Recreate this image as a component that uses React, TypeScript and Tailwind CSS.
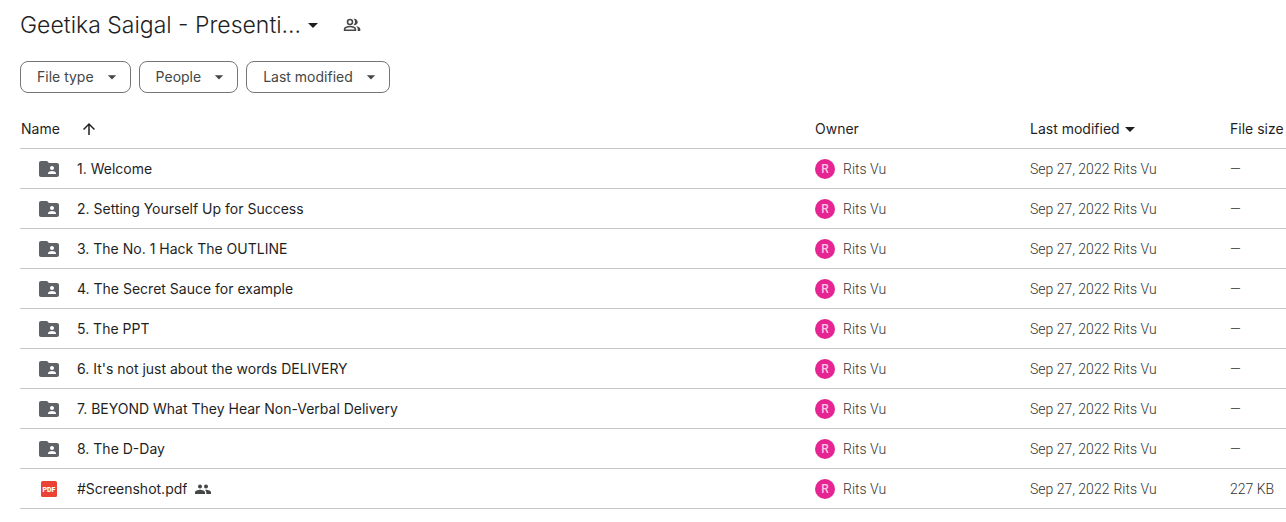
import type { ReactNode } from 'react';
import { MdArrowDropDown, MdArrowUpward, MdFolderShared } from 'react-icons/md';

interface DriveItem {
    name: string;
    kind: 'folder' | 'pdf';
    shared?: boolean;
    size?: string;
}

const ITEMS: DriveItem[] = [
    { name: '1. Welcome', kind: 'folder' },
    { name: '2. Setting Yourself Up for Success', kind: 'folder' },
    { name: '3. The No. 1 Hack The OUTLINE', kind: 'folder' },
    { name: '4. The Secret Sauce for example', kind: 'folder' },
    { name: '5. The PPT', kind: 'folder' },
    { name: "6. It's not just about the words DELIVERY", kind: 'folder' },
    { name: '7. BEYOND What They Hear Non-Verbal Delivery', kind: 'folder' },
    { name: '8. The D-Day', kind: 'folder' },
    { name: '#Screenshot.pdf', kind: 'pdf', shared: true, size: '227 KB' },
];

const FILTERS = ['File type', 'People', 'Last modified'];

export default function App() {
    return (
        <main className="bg-white pt-px pl-5 font-['Inter','Roboto',sans-serif] text-sm text-[#1f1f1f]">
            <header className="flex h-12 items-center">
                <h1>
                    <button type="button" aria-haspopup="menu" className="flex items-center text-[23px] font-light">
                        Geetika Saigal - Presenti...
                        <MdArrowDropDown className="size-6" />
                    </button>
                </h1>
                <button type="button" aria-label="Manage sharing" className="ml-[18px] text-[#444746]">
                    <PeopleOutlineIcon />
                </button>
            </header>

            <div className="mt-3 flex gap-2">
                {FILTERS.map((label) => (
                    <FilterChip key={label} label={label} />
                ))}
            </div>

            <table className="mt-[15px] w-full table-fixed text-left">
                <thead>
                    <tr className="h-10 border-b border-[#c7c7c7]">
                        <HeaderCell>
                            <button type="button" className="flex items-center pl-px">
                                Name
                                <MdArrowUpward className="ml-5 size-[18px]" />
                            </button>
                        </HeaderCell>
                        <HeaderCell className="w-[215px]">Owner</HeaderCell>
                        <HeaderCell className="w-[200px]">
                            <button type="button" className="flex items-center">
                                Last modified
                                <MdArrowDropDown className="-ml-0.5 size-6" />
                            </button>
                        </HeaderCell>
                        <HeaderCell className="w-14">File size</HeaderCell>
                    </tr>
                </thead>
                <tbody>
                    {ITEMS.map((item) => (
                        <ItemRow key={item.name} item={item} />
                    ))}
                </tbody>
            </table>
        </main>
    );
}

function FilterChip({ label }: { label: string }) {
    return (
        <button
            type="button"
            aria-haspopup="menu"
            className="flex h-8 items-center gap-2 rounded-lg border border-[#747775] pr-2 pl-4 text-[#444746]"
        >
            {label}
            <MdArrowDropDown className="size-5" />
        </button>
    );
}

function HeaderCell({ className, children }: { className?: string; children: ReactNode }) {
    return (
        <th scope="col" className={`p-0 pt-0.5 font-normal whitespace-nowrap ${className ?? ''}`}>
            {children}
        </th>
    );
}

function DetailCell({ children }: { children: ReactNode }) {
    return <td className="p-0 pt-0.5 font-['Roboto',sans-serif] font-light whitespace-nowrap text-[#303331]">{children}</td>;
}

function ItemRow({ item }: { item: DriveItem }) {
    return (
        <tr className="h-10 border-b border-[#c7c7c7]">
            <td className="p-0 pt-0.5">
                <a href="#" className="flex items-center pl-[17px]">
                    <span className="mr-4 flex w-6 justify-center">
                        {item.kind === 'folder' ? <MdFolderShared className="size-6 text-[#5f6368]" /> : <PdfIcon />}
                    </span>
                    <span className="truncate">{item.name}</span>
                    {item.shared && <PeopleIcon />}
                </a>
            </td>
            <DetailCell>
                <div className="flex items-center gap-2">
                    <span className="flex size-5 items-center justify-center rounded-full bg-[#e52592] text-xs font-medium text-[#fbc4e2]">
                        R
                    </span>
                    Rits Vu
                </div>
            </DetailCell>
            <DetailCell>
                <span className="mr-1">Sep 27, 2022</span>
                <span>Rits Vu</span>
            </DetailCell>
            <DetailCell>{item.size ?? '—'}</DetailCell>
        </tr>
    );
}

function PeopleOutlineIcon() {
    return (
        <svg viewBox="0 0 18 18" className="size-[18px]" aria-hidden="true">
            <circle cx="7" cy="6" r="2.5" fill="none" stroke="currentColor" strokeWidth="1.6" />
            <path
                d="M1.6 14.2v-1.3c0-1.4 3-2.4 5.4-2.4s5.4 1 5.4 2.4v1.3z"
                fill="none"
                stroke="currentColor"
                strokeWidth="1.6"
            />
            <path
                d="M10.6 9.2a4.8 4.8 0 0 0 0-6.4 3.3 3.3 0 1 1 0 6.4zM13 10c2.4.5 4.3 1.5 4.3 3v2h-2.6v-2c0-1.2-.6-2.2-1.7-3z"
                fill="currentColor"
            />
        </svg>
    );
}

function PeopleIcon() {
    return (
        <svg viewBox="0 0 16 16" className="ml-2 size-4 shrink-0 text-[#444746]" role="img" aria-label="Shared">
            <g fill="currentColor">
                <circle cx="5" cy="5.5" r="2" />
                <circle cx="11" cy="5.5" r="2" />
                <path d="M0 13v-1.5c0-1.7 3-2.7 5-2.7s5 1 5 2.7V13zM11.3 13v-1.5c0-1.1-.5-1.9-1.2-2.6 2.2-.4 5.9.7 5.9 2.6V13z" />
            </g>
        </svg>
    );
}

function PdfIcon() {
    return (
        <svg viewBox="0 0 16 16" className="size-4" role="img" aria-label="PDF">
            <rect width="16" height="16" rx="1.5" fill="#ea4335" />
            <text
                x="8"
                y="10.5"
                textAnchor="middle"
                fill="#fff"
                fontFamily="Roboto, sans-serif"
                fontSize="7"
                fontWeight="900"
            >
                PDF
            </text>
        </svg>
    );
}
